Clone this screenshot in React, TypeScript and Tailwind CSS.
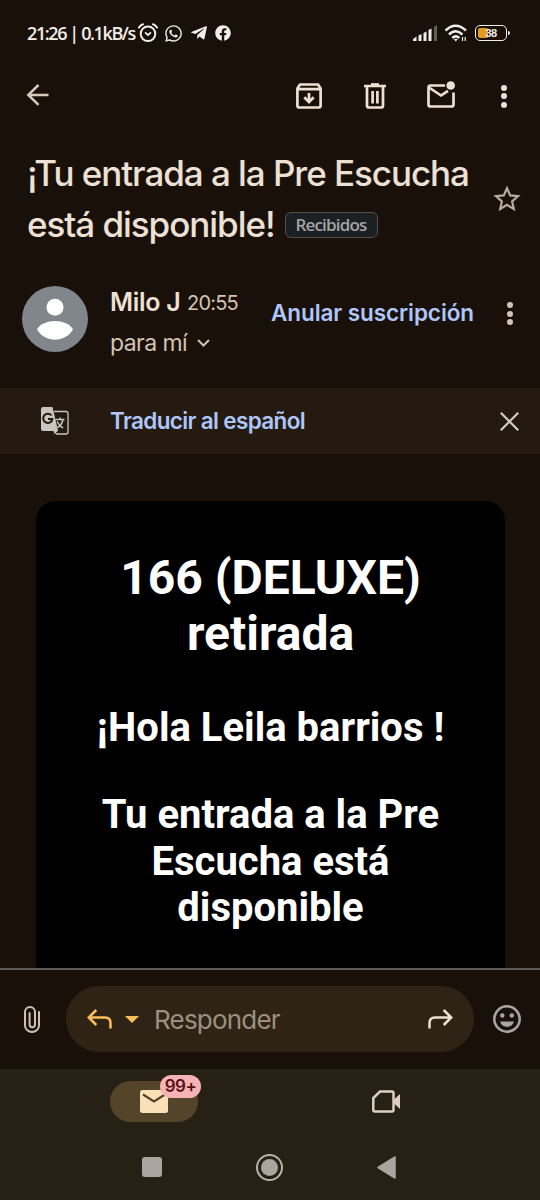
import type { ReactNode } from "react";
import { FaFacebook, FaTelegramPlane, FaWhatsapp } from "react-icons/fa";

function StatusBar() {
  return (
    <div className="flex h-[66px] items-center pl-[27px] pr-[30px] text-[#f3eee8]">
      <span className="w-[108px] whitespace-nowrap font-['Open_Sans',sans-serif] text-[18px] font-semibold tracking-[-1.400px]">
        21:26 | 0.1kB/s
      </span>
      <svg className="ml-[3px] h-5 w-5 shrink-0" viewBox="0 0 20 20" fill="none" stroke="currentColor">
        <circle cx="10" cy="10.8" r="7.3" strokeWidth="2" />
        <path d="M7 9.3l3 2.7 3-2.7" strokeWidth="1.7" />
        <path d="M1 4.5Q2.3 2 5 1.2M19 4.5Q17.700 2 15 1.200" strokeWidth="2" strokeLinecap="round" />
      </svg>
      <FaWhatsapp className="ml-[7px] h-[19px] w-[17px] shrink-0" />
      <FaTelegramPlane className="ml-2 h-[18px] w-[18px] shrink-0" />
      <FaFacebook className="ml-[7px] h-4 w-4 shrink-0" />
      <svg className="ml-auto h-4 w-[25px] shrink-0" viewBox="0 0 25 16" fill="currentColor">
        <path d="M0 14l3.500-2.500V16H0zM5.500 10.500l3-1.500v7h-3zM10.500 8l3-1.500V16h-3zM15.500 5l3-1.500V16h-3z" />
        <path d="M21 2l3-2v16h-3z" opacity=".35" />
      </svg>
      <svg className="ml-[6px] h-[18px] w-6 shrink-0" viewBox="0 0 24 18" fill="none" stroke="currentColor">
        <path d="M1.500 6.500q10-9.500 20.500 0M5 10.500q6.500-6.500 13.500 0M8.300 14q3.500-3.300 7 0" strokeWidth="2.500" />
        <path d="M9.800 15h4l-2 2.500z" fill="currentColor" stroke="none" />
        <path d="M18.500 13v4M21.200 13v4" strokeWidth="1.200" />
      </svg>
      <div className="ml-[7px] flex items-center">
        <div className="relative h-4 w-8 rounded-[5px] border-[1.5px] border-current p-[2px]">
          <div className="h-full w-[10px] rounded-[2px] bg-[#e39b22]" />
          <span className="absolute inset-0 flex items-center justify-center font-['Liberation_Sans',sans-serif] text-[11px] font-bold leading-none tracking-[-0.5px]">
            38
          </span>
        </div>
        <div className="ml-px h-1 w-[2px] rounded-r bg-current" />
      </div>
    </div>
  );
}

function Toolbar() {
  return (
    <div className="flex h-[60px] items-center pl-[26px] pr-[31px] text-[#ede0d4]">
      <svg className="mb-[3px] h-[22px] w-[23px] text-[#d8c9ba]" viewBox="0 0 23 22" fill="none" stroke="currentColor" strokeWidth="2.500">
        <path d="M12.500 1L2.300 10.900l10.200 10M2.500 10.900H22.500" />
      </svg>
      <svg className="ml-[247px] h-[26px] w-[26px]" viewBox="0 0 26 26" fill="none" stroke="currentColor" strokeWidth="2.700">
        <path d="M1.400 5.500L4 1.500h18l2.600 4V22.500a2 2 0 0 1-2 2H3.400a2 2 0 0 1-2-2zM1.400 6.200h23.200" strokeLinejoin="round" />
        <path d="M13 10v8.500M8.300 14.300L13 19l4.700-4.700" />
      </svg>
      <svg className="ml-[42px] h-[26px] w-[22px]" viewBox="0 0 22 26" fill="none" stroke="currentColor" strokeWidth="2.700">
        <path d="M0 3h22M3 4v18.500q0 2 2 2h12q2 0 2-2V4M8.600 8v12.500M13.400 8v12.500" />
        <path d="M7 1.500h8" />
      </svg>
      <svg className="mb-[2px] ml-[41px] h-7 w-7" viewBox="0 0 28 28" fill="none" stroke="currentColor" strokeWidth="2.700">
        <path d="M18 4.500H3.500q-2 0-2 2v17q0 2 2 2h21q2 0 2-2V11.500M2 6.500l12 8 7-4.700" />
        <circle cx="23.700" cy="4.500" r="4.300" fill="currentColor" stroke="none" />
      </svg>
      <Dots className="ml-[46px]" />
    </div>
  );
}

function Dots({ className = "" }: { className?: string }) {
  return (
    <div className={`flex flex-col gap-[2.500px] ${className}`}>
      <span className="h-[6px] w-[6px] rounded-full bg-current" />
      <span className="h-[6px] w-[6px] rounded-full bg-current" />
      <span className="h-[6px] w-[6px] rounded-full bg-current" />
    </div>
  );
}

function Subject() {
  return (
    <div className="flex h-[134px] justify-between pl-[27px] pr-[19px] pt-[22px]">
      <h1 className="whitespace-nowrap font-['Inter',sans-serif] text-[35px] font-medium leading-[51px] tracking-[-1.050px] text-[#ede0d4]">
        ¡Tu entrada a la Pre Escucha
        <span className="flex items-center">
          <span>está disponible!</span>
          <span className="ml-[10px] flex h-[26px] w-[93px] items-center justify-center rounded-md border border-[#52504d] bg-[#1d2023] font-['Open_Sans',sans-serif] text-[17px] font-semibold leading-none tracking-[-0.800px] text-[#a3a5a6]">
            Recibidos
          </span>
        </span>
      </h1>
      <svg className="mt-[37px] h-[27px] w-7 text-[#b8aca0]" viewBox="0 0 28 27" fill="none" stroke="currentColor" strokeWidth="2.200">
        <path d="M14 3.200l3.200 7.200 7.800.7-5.900 5.200 1.700 7.700-6.800-4.100L7.200 24l1.700-7.700L3 11.100l7.800-.7z" />
      </svg>
    </div>
  );
}

function Sender() {
  return (
    <div className="flex h-32 pl-[22px] pr-[27px] font-['Inter',sans-serif]">
      <svg className="mt-[26px] h-[66px] w-[66px] shrink-0" viewBox="0 0 66 66">
        <circle cx="33" cy="33" r="33" fill="#80868b" />
        <circle cx="33" cy="21.300" r="8.500" fill="#fff" />
        <path d="M15 43.500C21 32 45 32 51 43.500 43 57 23 57 15 43.500z" fill="#fff" />
      </svg>
      <div className="ml-[22px] mt-[23px] whitespace-nowrap">
        <div className="flex h-10 items-center">
          <span className="w-[77px] text-[25px] font-semibold tracking-[-0.300px] text-[#ede0d4]">Milo J</span>
          <span className="text-[20px] tracking-[-0.800px] text-[#d3c4b4]">20:55</span>
        </div>
        <div className="flex h-10 items-center text-[#d3c4b4]">
          <span className="text-[23px] tracking-[-0.550px]">para mí</span>
          <svg className="ml-[10px] h-2 w-[13px]" viewBox="0 0 13 8" fill="none" stroke="currentColor" strokeWidth="2">
            <path d="M1 1l5.500 5.500L12 1" />
          </svg>
        </div>
      </div>
      <span className="ml-auto mt-[35px] whitespace-nowrap text-[22.500px] font-semibold leading-9 tracking-[-0.080px] text-[#afc6fa]">
        Anular suscripción
      </span>
      <Dots className="ml-[33px] mt-[42px] text-[#d3c4b4]" />
    </div>
  );
}

function TranslateBar() {
  return (
    <div className="flex h-[66px] items-center bg-[#241a0f] pl-[41px] pr-[21px]">
      <svg className="h-7 w-7" viewBox="0 0 28 28" fill="none">
        <path d="M13 4.500h12q2 0 2 2v18.500q0 2-2 2H15" stroke="#c9c6c1" strokeWidth="1.300" />
        <path d="M2 0h9.500l5.500 23.500-3.300 4-1.200-3.500H2q-2 0-2-2V2q0-2 2-2z" fill="#c9c6c1" />
        <path d="M10.500 8.500A4.600 4.600 0 1 0 11.400 12H7" stroke="#241a0f" strokeWidth="2" />
        <path d="M14.500 12.500h9M19 10.500v2M22 12.500q-1.500 6-5.500 8M16 14.500q2 4 6 6.500" stroke="#c9c6c1" strokeWidth="1.500" />
      </svg>
      <span className="ml-[41px] font-['Inter',sans-serif] text-[22.500px] font-semibold tracking-[-0.650px] text-[#afc6fa]">
        Traducir al español
      </span>
      <svg className="ml-auto h-[19px] w-[19px]" viewBox="0 0 19 19" stroke="#d3cdc5" strokeWidth="2.200">
        <path d="M.8.8l17.400 17.400M18.200.8L.8 18.200" />
      </svg>
    </div>
  );
}

function MailBody() {
  return (
    <div className="h-[514px] overflow-hidden pl-9 pr-[35px] pt-[47px]">
      <div className="h-full rounded-t-[20px] bg-black pt-[49px] text-center font-['Roboto',sans-serif] font-bold text-white">
        <p className="text-[48px] leading-[56px]">
          166 (DELUXE)
          <br />
          retirada
        </p>
        <p className="mt-[42px] text-[40px] leading-[47px]">¡Hola Leila barrios !</p>
        <p className="mt-[41px] text-[40px] leading-[46.700px]">
          Tu entrada a la Pre
          <br />
          Escucha está
          <br />
          disponible
        </p>
      </div>
    </div>
  );
}

function ReplyBar() {
  return (
    <div className="flex h-[101px] items-center border-t-2 border-[#5c5b57] pb-px pl-6">
      <svg className="h-[27px] w-4 shrink-0" viewBox="0 0 16 27" fill="none" stroke="#cfc2b5" strokeWidth="2" strokeLinecap="round">
        <path d="M15 6v13.500a7 6.500 0 0 1-14 0V6a5 5 0 0 1 10 0v12.500a2.700 2.700 0 0 1-5.400 0V7" />
      </svg>
      <div className="ml-[26px] flex h-[66px] w-[408px] shrink-0 items-center rounded-full bg-[#2e2314] pl-[21px] pr-[21px]">
        <svg className="h-5 w-[25px]" viewBox="0 0 25 20" fill="none" stroke="#fcbd5b" strokeWidth="2.500">
          <path d="M9.300 1L1.800 8.500 9.300 16M2 8.500h16q5.500 0 5.500 5.500v5.500" />
        </svg>
        <svg className="ml-[13px] h-[7px] w-[14px]" viewBox="0 0 14 7">
          <path d="M0 0h14L7 7z" fill="#fcbd5b" />
        </svg>
        <span className="ml-[15px] font-['Inter',sans-serif] text-[26px] tracking-[-0.800px] text-[#9d9080]">Responder</span>
        <svg className="ml-auto h-5 w-[25px]" viewBox="0 0 25 20" fill="none" stroke="#ede0d4" strokeWidth="2.500">
          <path d="M15.700 1l7.500 7.500-7.500 7.500M23 8.500H7Q1.500 8.500 1.500 14v5.500" />
        </svg>
      </div>
      <svg className="ml-[19px] h-7 w-7 shrink-0" viewBox="0 0 28 28" fill="#a9a6a2">
        <circle cx="14" cy="14" r="12.700" fill="none" stroke="#a9a6a2" strokeWidth="2.500" />
        <circle cx="9.300" cy="10.500" r="2.200" />
        <circle cx="18.800" cy="10.500" r="2.200" />
        <path d="M7 16.500h14q-1.800 5.300-7 5.300t-7-5.300z" />
      </svg>
    </div>
  );
}

function NavCell({ children }: { children: ReactNode }) {
  return <div className="flex w-[88px] justify-center">{children}</div>;
}

function BottomNav() {
  return (
    <div className="h-[131px] bg-[#262015] pt-3">
      <div className="flex items-center pl-[110px]">
        <div className="relative flex h-[41px] w-[88px] items-center justify-center rounded-full bg-[#53442a]">
          <svg className="h-[23px] w-7" viewBox="0 0 28 23">
            <rect width="28" height="23" rx="2.500" fill="#fbdfb7" />
            <path d="M3 4.500l11 7 11-7" fill="none" stroke="#53442a" strokeWidth="2.200" />
          </svg>
          <span className="absolute -top-[6px] left-[50px] flex h-[23px] w-[41px] items-center justify-center rounded-full bg-[#f5b3b5] font-['Inter',sans-serif] text-[17px] font-semibold tracking-[-0.500px] text-[#5b1014]">
            99+
          </span>
        </div>
        <svg className="ml-[174px] h-[23px] w-[28px]" viewBox="0 0 28 23" fill="none">
          <path d="M8 1.500h12q1.500 0 1.500 1.500v17q0 1.500-1.500 1.500H3q-1.700 0-1.700-1.500V8z" stroke="#ddd0c2" strokeWidth="2.500" />
          <path d="M22 9.500L28 4v15l-6-5.500z" fill="#ddd0c2" />
        </svg>
      </div>
      <div className="mt-[31px] flex h-7 items-center gap-[29px] pl-[108px]">
        <NavCell>
          <div className="h-5 w-5 rounded-[3px] bg-[#aaa69f]" />
        </NavCell>
        <NavCell>
          <div className="flex h-[27px] w-[27px] items-center justify-center rounded-full border-2 border-[#b7b3ad]">
            <div className="h-[17px] w-[17px] rounded-full bg-[#aaa69f]" />
          </div>
        </NavCell>
        <NavCell>
          <svg className="h-[23px] w-[19px]" viewBox="0 0 19 23">
            <path d="M18 1v21L1 11.500z" fill="#aaa69f" stroke="#aaa69f" strokeWidth="1.500" strokeLinejoin="round" />
          </svg>
        </NavCell>
      </div>
    </div>
  );
}

export default function App() {
  return (
    <div className="h-[1200px] w-[540px] overflow-hidden bg-[#191109]">
      <StatusBar />
      <Toolbar />
      <Subject />
      <Sender />
      <TranslateBar />
      <MailBody />
      <ReplyBar />
      <BottomNav />
    </div>
  );
}
